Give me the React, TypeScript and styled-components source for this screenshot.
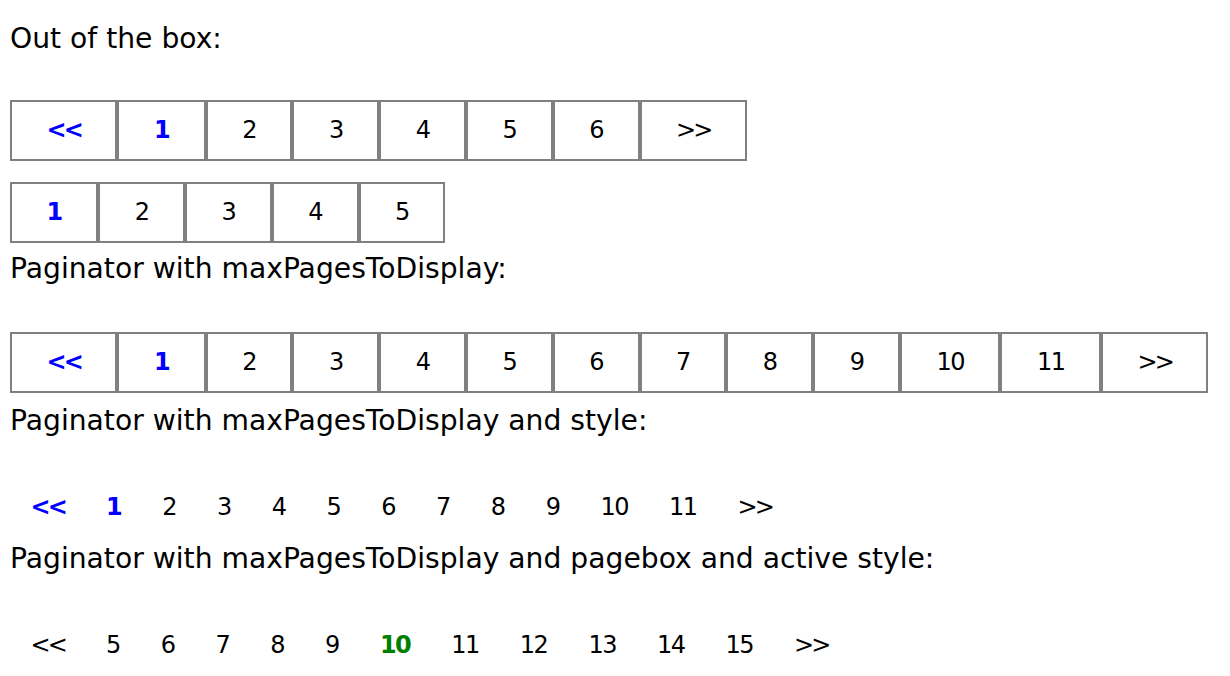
import React from "react";
import styled, { createGlobalStyle, css } from "styled-components";

const GlobalStyle = createGlobalStyle`
  html, body {
    margin: 0;
    padding: 0;
    background: #ffffff;
  }
  body {
    font-family: "DejaVu Sans", "Liberation Sans", sans-serif;
    color: #000000;
  }
`;

type Variant = "boxed" | "plain" | "pagebox";
type Tone = "none" | "blue" | "green";

const Page = styled.main`
  display: flex;
  flex-direction: column;
  align-items: flex-start;
  padding: 23px 10px 0;
`;

const Heading = styled.p<{ $after: number }>`
  margin: 0 0 ${(p) => p.$after}px;
  font-size: 28.2px;
  line-height: 32px;
  white-space: nowrap;
`;

const Pager = styled.ul<{ $after: number }>`
  display: flex;
  margin: 0 0 ${(p) => p.$after}px;
  padding: 0;
  list-style: none;
`;

const PageItem = styled.li<{ $variant: Variant; $arrow: boolean; $tone: Tone }>`
  font-size: 24px;
  text-align: center;
  white-space: nowrap;
  letter-spacing: ${(p) => (p.$arrow ? "-0.12em" : "-1.5px")};
  cursor: pointer;

  ${(p) =>
    p.$variant === "boxed"
      ? css`
          box-sizing: border-box;
          height: 61px;
          padding: 0 34.5px;
          border: 2px solid #808080;
          line-height: 57px;
        `
      : css`
          padding: 0 20.5px;
          line-height: 32px;
        `}

  ${(p) =>
    p.$tone === "blue" &&
    css`
      color: #0000ff;
      font-weight: bold;
    `}

  ${(p) =>
    p.$tone === "green" &&
    css`
      color: #008000;
      font-weight: bold;
    `}
`;

type Item = { label: string; kind: "prev" | "next" | "page"; active: boolean };

const range = (from: number, to: number) =>
  Array.from({ length: to - from + 1 }, (_, i) => from + i);

function buildItems(pages: number[], active: number, arrows: boolean): Item[] {
  const items: Item[] = pages.map((n) => ({
    label: String(n),
    kind: "page",
    active: n === active,
  }));
  if (!arrows) return items;
  return [
    { label: "<<", kind: "prev", active: false },
    ...items,
    { label: ">>", kind: "next", active: false },
  ];
}

function toneFor(item: Item, variant: Variant): Tone {
  if (variant === "pagebox") return item.active ? "green" : "none";
  if (item.active || item.kind === "prev") return "blue";
  return "none";
}

type PaginatorProps = {
  variant: Variant;
  pages: number[];
  active: number;
  arrows?: boolean;
  after?: number;
};

function Paginator({ variant, pages, active, arrows = true, after = 0 }: PaginatorProps) {
  const items = buildItems(pages, active, arrows);
  return (
    <Pager $after={after}>
      {items.map((item) => (
        <PageItem
          key={item.kind + item.label}
          $variant={variant}
          $arrow={item.kind !== "page"}
          $tone={toneFor(item, variant)}
        >
          {item.label}
        </PageItem>
      ))}
    </Pager>
  );
}

export default function App() {
  return (
    <>
      <GlobalStyle />
      <Page>
        <Heading $after={45}>Out of the box:</Heading>
        <Paginator variant="boxed" pages={range(1, 6)} active={1} after={21} />
        <Paginator variant="boxed" pages={range(1, 5)} active={1} arrows={false} after={10} />

        <Heading $after={47}>Paginator with maxPagesToDisplay:</Heading>
        <Paginator variant="boxed" pages={range(1, 11)} active={1} after={12} />

        <Heading $after={54}>Paginator with maxPagesToDisplay and style:</Heading>
        <Paginator variant="plain" pages={range(1, 11)} active={1} after={20} />

        <Heading $after={54}>Paginator with maxPagesToDisplay and pagebox and active style:</Heading>
        <Paginator variant="pagebox" pages={range(5, 15)} active={10} />
      </Page>
    </>
  );
}
